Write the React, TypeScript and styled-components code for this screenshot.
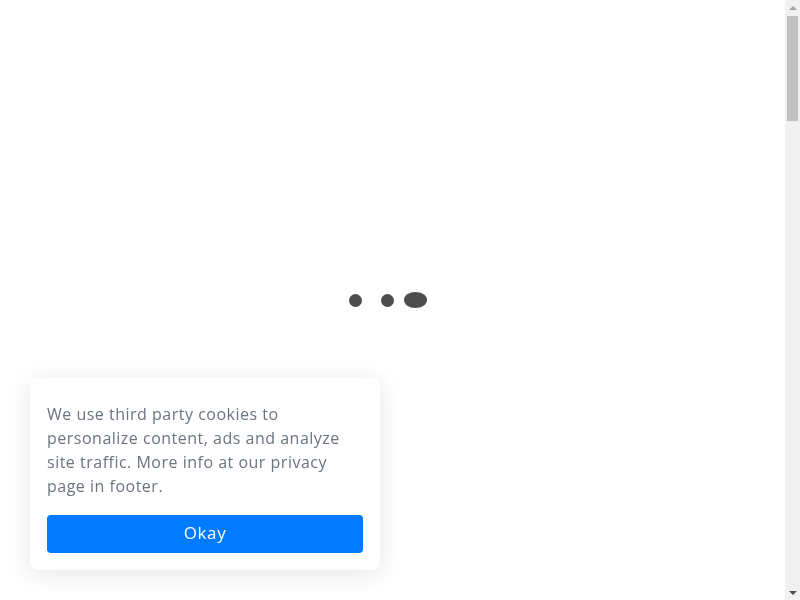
import React from "react";
import styled, { createGlobalStyle } from "styled-components";

const Global = createGlobalStyle`
  html, body { margin: 0; padding: 0; background: #ffffff; overflow: hidden; }
  body { font-family: "Open Sans", "Noto Sans", sans-serif; }
`;

const Loader = styled.div`
  position: fixed;
  left: 349px;
  top: 292px;
  display: flex;
  align-items: center;
  height: 16px;
`;

const Dot = styled.span<{ $w: number; $h: number; $ml: number }>`
  display: block;
  width: ${(p) => p.$w}px;
  height: ${(p) => p.$h}px;
  margin-left: ${(p) => p.$ml}px;
  border-radius: 50%;
  background: #4d4d4d;
`;

const Card = styled.div`
  position: fixed;
  left: 30px;
  bottom: 30px;
  width: 350px;
  box-sizing: border-box;
  padding: 24px 17px 17px;
  background: #ffffff;
  border-radius: 8px;
  box-shadow: 0 4px 24px rgba(0, 0, 0, 0.1);
`;

const Message = styled.p`
  margin: 0;
  font-size: 16px;
  line-height: 24px;
  color: #6b7480;
  letter-spacing: 0.5px;
`;

const OkayButton = styled.button`
  display: block;
  width: 100%;
  height: 38px;
  margin-top: 17px;
  padding: 0 0 3px;
  border: none;
  border-radius: 4px;
  background: #007bff;
  color: #ffffff;
  font-family: inherit;
  font-size: 17px;
  letter-spacing: 0.6px;
  cursor: pointer;
`;

const Scrollbar = styled.div`
  position: fixed;
  top: 0;
  right: 0;
  width: 15px;
  height: 100%;
  background: #f1f1f1;
  display: flex;
  flex-direction: column;
  align-items: center;
`;

const Arrow = styled.div<{ $down?: boolean }>`
  height: 15px;
  width: 15px;
  display: flex;
  align-items: center;
  justify-content: center;
  &::before {
    content: "";
    width: 0;
    height: 0;
    border-left: 4px solid transparent;
    border-right: 4px solid transparent;
    ${(p) =>
      p.$down
        ? "border-top: 4px solid #505050;"
        : "border-bottom: 4px solid #a3a3a3;"}
  }
`;

const Track = styled.div`
  flex: 1;
  width: 100%;
  display: flex;
  justify-content: center;
`;

const Thumb = styled.div`
  width: 11px;
  height: 105px;
  margin-top: 1px;
  background: #c1c1c1;
`;

export default function App() {
  return (
    <>
      <Global />
      <Loader>
        <Dot $w={13} $h={13} $ml={0} />
        <Dot $w={13} $h={13} $ml={19} />
        <Dot $w={23} $h={16} $ml={10} />
      </Loader>
      <Card>
        <Message>
          We use third party cookies to personalize content, ads and analyze
          site traffic. More info at our privacy page in footer.
        </Message>
        <OkayButton>Okay</OkayButton>
      </Card>
      <Scrollbar>
        <Arrow />
        <Track>
          <Thumb />
        </Track>
        <Arrow $down />
      </Scrollbar>
    </>
  );
}
